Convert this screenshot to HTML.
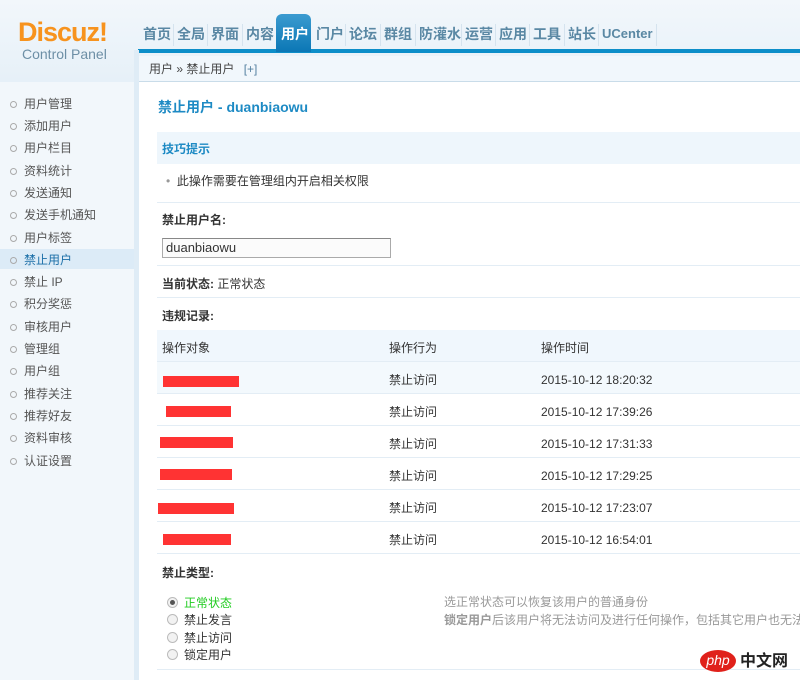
<!DOCTYPE html>
<html><head><meta charset="utf-8"><style>
*{margin:0;padding:0;box-sizing:border-box}
body{width:800px;height:680px;overflow:hidden;background:#fff;font-family:"Liberation Sans","Noto Sans CJK SC",sans-serif;font-size:12px;color:#333;position:relative}
.a{position:absolute;white-space:nowrap;line-height:14px}
#hd{position:absolute;left:0;top:0;width:800px;height:82px;background:linear-gradient(#f2f7fb,#e6f0f8)}
#side{position:absolute;left:0;top:82px;width:134px;height:598px;background:#f2f7fb}
#sep{position:absolute;left:134px;top:50px;width:5px;height:630px;background:#dfecf6}
.n{position:absolute;top:25px;font-size:14px;line-height:18px;color:#5a88a4;font-weight:bold;white-space:nowrap}
.v{position:absolute;top:24px;width:1px;height:22px;background:#d5e3ee}
.si{position:absolute;left:0;width:134px;height:20px;line-height:20px;padding-left:24px;font-size:12px;color:#555}
.si:before{content:"";position:absolute;left:10px;top:7px;width:5px;height:5px;border:1px solid #aaa;border-radius:50%}
.row{position:absolute;left:157px;width:643px;border-bottom:1px solid #e3edf5}
.red{position:absolute;background:#ff3333;height:11px}
.rad{position:absolute;left:167px;width:11px;height:11px;border:1px solid #bbb;border-radius:50%;background:#f2f2f2}
</style></head><body>
<div id="hd"></div>
<div class="a" style="left:18px;top:18px;font-size:27px;line-height:28px;font-weight:bold;color:#f7931e;letter-spacing:-1px">Discuz!</div>
<div class="a" style="left:22px;top:47px;font-size:14px;color:#6d8fa6">Control Panel</div>
<div style="position:absolute;left:138px;top:49px;width:662px;height:4px;background:#0d8ec9"></div>
<div style="position:absolute;left:276px;top:14px;width:35px;height:38px;background:linear-gradient(#3b9bd0,#0b77b5);border-radius:6px 6px 0 0"></div>
<div class="n" style="left:143px">首页</div><div class="v" style="left:173px"></div>
<div class="n" style="left:177px">全局</div><div class="v" style="left:207px"></div>
<div class="n" style="left:211px">界面</div><div class="v" style="left:242px"></div>
<div class="n" style="left:246px">内容</div>
<div class="n" style="left:281px;color:#fff">用户</div>
<div class="n" style="left:316px">门户</div><div class="v" style="left:345px"></div>
<div class="n" style="left:349px">论坛</div><div class="v" style="left:380px"></div>
<div class="n" style="left:384px">群组</div><div class="v" style="left:415px"></div>
<div class="n" style="left:419px">防灌水</div><div class="v" style="left:461px"></div>
<div class="n" style="left:465px">运营</div><div class="v" style="left:495px"></div>
<div class="n" style="left:499px">应用</div><div class="v" style="left:529px"></div>
<div class="n" style="left:533px">工具</div><div class="v" style="left:564px"></div>
<div class="n" style="left:568px">站长</div><div class="v" style="left:598px"></div>
<div class="n" style="left:602px;font-size:13px">UCenter</div><div class="v" style="left:656px"></div>
<div style="position:absolute;left:139px;top:56px;width:661px;height:26px;background:#f1f7fc;border-bottom:1px solid #c9dce9"></div>
<div class="a" style="left:149px;top:62px;color:#444">用户 » 禁止用户 <span style="color:#5580a0;margin-left:6px">[+]</span></div>
<div id="side"></div>
<div id="sep"></div>
<div style="position:absolute;left:0;top:249px;width:134px;height:20px;background:#dcebf7"></div>
<div class="si" style="top:94px">用户管理</div>
<div class="si" style="top:116px">添加用户</div>
<div class="si" style="top:138px">用户栏目</div>
<div class="si" style="top:161px">资料统计</div>
<div class="si" style="top:183px">发送通知</div>
<div class="si" style="top:205px">发送手机通知</div>
<div class="si" style="top:228px">用户标签</div>
<div class="si" style="top:250px;color:#1b6fa8">禁止用户</div>
<div class="si" style="top:272px">禁止 IP</div>
<div class="si" style="top:294px">积分奖惩</div>
<div class="si" style="top:317px">审核用户</div>
<div class="si" style="top:339px">管理组</div>
<div class="si" style="top:361px">用户组</div>
<div class="si" style="top:384px">推荐关注</div>
<div class="si" style="top:406px">推荐好友</div>
<div class="si" style="top:428px">资料审核</div>
<div class="si" style="top:451px">认证设置</div>

<div class="a" style="left:158px;top:100px;font-size:14px;font-weight:bold;color:#1d8ac4">禁止用户 - duanbiaowu</div>
<div class="row" style="top:132px;height:32px;background:#eef6fc;border-bottom:none"></div>
<div class="a" style="left:162px;top:142px;font-weight:bold;color:#1d8ac4">技巧提示</div>
<div class="row" style="top:164px;height:39px"></div>
<div class="a" style="left:166px;top:174px"><span style="color:#999">•</span>&nbsp; 此操作需要在管理组内开启相关权限</div>
<div class="a" style="left:162px;top:213px;font-weight:bold">禁止用户名:</div>
<div style="position:absolute;left:162px;top:238px;width:229px;height:20px;border:1px solid #aaa;border-top-color:#888;background:#fbfbfb;padding-left:3px;line-height:18px;font-size:13px">duanbiaowu</div>
<div class="row" style="top:232px;height:34px"></div>
<div class="a" style="left:162px;top:277px"><b>当前状态:</b> 正常状态</div>
<div class="row" style="top:266px;height:32px"></div>
<div class="a" style="left:162px;top:309px;font-weight:bold">违规记录:</div>
<div class="row" style="top:330px;height:32px;background:#f0f7fd"></div>
<div class="a" style="left:162px;top:341px">操作对象</div><div class="a" style="left:389px;top:341px">操作行为</div><div class="a" style="left:541px;top:341px">操作时间</div>
<div class="row" style="top:362px;height:32px;background:#f3f9fd"></div>
<div class="row" style="top:394px;height:32px"></div>
<div class="row" style="top:426px;height:32px"></div>
<div class="row" style="top:458px;height:32px"></div>
<div class="row" style="top:490px;height:32px"></div>
<div class="row" style="top:522px;height:32px"></div>
<div class="red" style="left:163px;top:376px;width:76px"></div>
<div class="red" style="left:166px;top:406px;width:65px"></div>
<div class="red" style="left:160px;top:437px;width:73px"></div>
<div class="red" style="left:160px;top:469px;width:72px"></div>
<div class="red" style="left:158px;top:503px;width:76px"></div>
<div class="red" style="left:163px;top:534px;width:68px"></div>
<div class="a" style="left:389px;top:373px">禁止访问</div><div class="a" style="left:541px;top:373px">2015-10-12 18:20:32</div>
<div class="a" style="left:389px;top:405px">禁止访问</div><div class="a" style="left:541px;top:405px">2015-10-12 17:39:26</div>
<div class="a" style="left:389px;top:437px">禁止访问</div><div class="a" style="left:541px;top:437px">2015-10-12 17:31:33</div>
<div class="a" style="left:389px;top:469px">禁止访问</div><div class="a" style="left:541px;top:469px">2015-10-12 17:29:25</div>
<div class="a" style="left:389px;top:501px">禁止访问</div><div class="a" style="left:541px;top:501px">2015-10-12 17:23:07</div>
<div class="a" style="left:389px;top:533px">禁止访问</div><div class="a" style="left:541px;top:533px">2015-10-12 16:54:01</div>
<div class="a" style="left:162px;top:566px;font-weight:bold">禁止类型:</div>
<div class="rad" style="top:597px"><div style="width:5px;height:5px;background:#555;border-radius:50%;margin:2px"></div></div>
<div class="rad" style="top:614px"></div><div class="rad" style="top:632px"></div><div class="rad" style="top:649px"></div>
<div class="a" style="left:184px;top:596px;color:#22cc22">正常状态</div>
<div class="a" style="left:184px;top:613px">禁止发言</div>
<div class="a" style="left:184px;top:631px">禁止访问</div>
<div class="a" style="left:184px;top:648px">锁定用户</div>
<div class="a" style="left:444px;top:595px;color:#999">选正常状态可以恢复该用户的普通身份</div>
<div class="a" style="left:444px;top:613px;color:#999"><b>锁定用户</b>后该用户将无法访问及进行任何操作，包括其它用户也无法访问该</div>
<div class="row" style="top:560px;height:110px"></div>
<div style="position:absolute;left:700px;top:650px;width:36px;height:22px;background:#e0211b;border-radius:50%;color:#fff;font-size:14px;text-align:center;line-height:20px;font-style:italic">php</div>
<div class="a" style="left:740px;top:653px;font-size:16px;line-height:18px;font-weight:bold;color:#222">中文网</div>
</body></html>
